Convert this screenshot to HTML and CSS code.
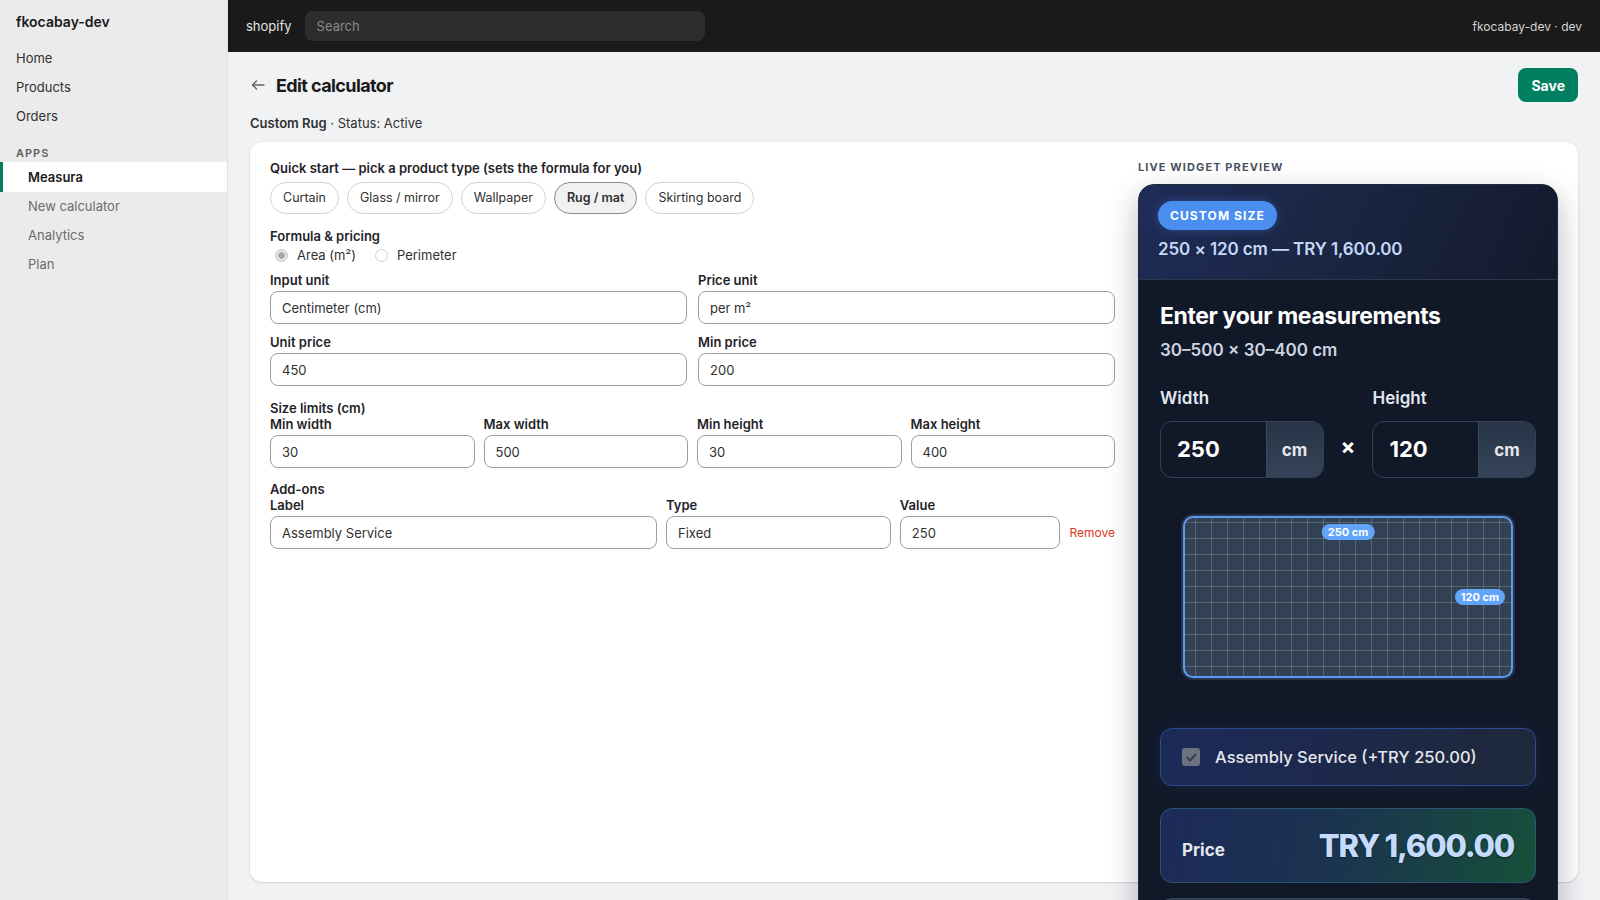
FILE: index.html
```html
<!DOCTYPE html>
<html lang="en">
<head>
    <meta charset="UTF-8">
    <meta name="viewport" content="width=device-width, initial-scale=1.0">
    <title>Edit calculator · Measura</title>
    <link rel="stylesheet" href="styles.css">
</head>
<body>
<div class="app">
    <aside class="sidebar">
        <div class="store-name">fkocabay-dev</div>
        <nav class="nav">
            <a class="nav-item">Home</a>
            <a class="nav-item">Products</a>
            <a class="nav-item">Orders</a>
        </nav>
        <div class="nav-heading">Apps</div>
        <a class="nav-app">Measura</a>
        <a class="nav-sub">New calculator</a>
        <a class="nav-sub">Analytics</a>
        <a class="nav-sub">Plan</a>
    </aside>

    <div class="main">
        <header class="topbar">
            <span class="brand">shopify</span>
            <div class="search">Search</div>
            <span class="account">fkocabay-dev · dev</span>
        </header>

        <div class="page">
            <div class="page-header">
                <div class="title-wrap">
                    <svg class="back" width="16" height="16" viewBox="0 0 16 16" fill="none" stroke="#616161" stroke-width="1.3" stroke-linecap="round" stroke-linejoin="round">
                        <path d="M14 8H2.5"/>
                        <path d="M6.5 4L2.5 8l4 4"/>
                    </svg>
                    <h1>Edit calculator</h1>
                </div>
                <button class="btn-save">Save</button>
            </div>
            <p class="subtitle"><strong>Custom Rug</strong> · Status: Active</p>

            <div class="card">
                <!-- settings form -->
                <div class="editor">
                    <div class="group-title">Quick start — pick a product type (sets the formula for you)</div>
                    <div class="pills">
                        <span class="pill">Curtain</span>
                        <span class="pill">Glass / mirror</span>
                        <span class="pill">Wallpaper</span>
                        <span class="pill active">Rug / mat</span>
                        <span class="pill">Skirting board</span>
                    </div>

                    <div class="section">
                        <div class="group-title">Formula &amp; pricing</div>
                        <div class="radios">
                            <span class="radio"><span class="dot checked"></span>Area (m²)</span>
                            <span class="radio"><span class="dot"></span>Perimeter</span>
                        </div>
                        <div class="grid-2">
                            <div class="field">
                                <label>Input unit</label>
                                <input type="text" value="Centimeter (cm)">
                            </div>
                            <div class="field">
                                <label>Price unit</label>
                                <input type="text" value="per m²">
                            </div>
                            <div class="field">
                                <label>Unit price</label>
                                <input type="text" value="450">
                            </div>
                            <div class="field">
                                <label>Min price</label>
                                <input type="text" value="200">
                            </div>
                        </div>
                    </div>

                    <div class="section size">
                        <div class="group-title small">Size limits (cm)</div>
                        <div class="grid-4">
                            <div class="field">
                                <label>Min width</label>
                                <input type="text" value="30">
                            </div>
                            <div class="field">
                                <label>Max width</label>
                                <input type="text" value="500">
                            </div>
                            <div class="field">
                                <label>Min height</label>
                                <input type="text" value="30">
                            </div>
                            <div class="field">
                                <label>Max height</label>
                                <input type="text" value="400">
                            </div>
                        </div>
                    </div>

                    <div class="section addons">
                        <div class="group-title small">Add-ons</div>
                        <div class="addon-row">
                            <div class="field">
                                <label>Label</label>
                                <input type="text" value="Assembly Service">
                            </div>
                            <div class="field">
                                <label>Type</label>
                                <input type="text" value="Fixed">
                            </div>
                            <div class="field">
                                <label>Value</label>
                                <input type="text" value="250">
                            </div>
                            <a class="remove">Remove</a>
                        </div>
                    </div>
                </div>

                <!-- storefront widget preview -->
                <div class="preview">
                    <div class="preview-label">Live widget preview</div>
                    <div class="widget">
                        <div class="widget-head">
                            <span class="badge">Custom size</span>
                            <div class="widget-sum">250 × 120 cm — TRY 1,600.00</div>
                        </div>
                        <div class="widget-body">
                            <h2>Enter your measurements</h2>
                            <div class="range">30–500 × 30–400 cm</div>

                            <div class="measure">
                                <div class="mfield">
                                    <div class="mlabel">Width</div>
                                    <div class="mbox">
                                        <span class="num">250</span>
                                        <span class="unit">cm</span>
                                    </div>
                                </div>
                                <span class="times">×</span>
                                <div class="mfield">
                                    <div class="mlabel">Height</div>
                                    <div class="mbox">
                                        <span class="num">120</span>
                                        <span class="unit">cm</span>
                                    </div>
                                </div>
                            </div>

                            <div class="stage">
                                <div class="rug" style="width: 330px; height: 162px;">
                                    <span class="dim dim-w">250 cm</span>
                                    <span class="dim dim-h">120 cm</span>
                                </div>
                            </div>

                            <div class="addon-box">
                                <span class="check">
                                    <svg width="13" height="13" viewBox="0 0 12 12" fill="none" stroke="#3a3f47" stroke-width="2" stroke-linecap="round" stroke-linejoin="round"><path d="M2.2 6.3l2.5 2.4 5-5.4"/></svg>
                                </span>
                                <span>Assembly Service (+TRY 250.00)</span>
                            </div>

                            <div class="price-box">
                                <span class="price-label">Price</span>
                                <span class="price-value">TRY 1,600.00</span>
                            </div>

                            <button class="cart-btn">Add to cart</button>
                        </div>
                    </div>
                </div>
            </div>
        </div>
    </div>
</div>
</body>
</html>
```

FILE: styles.css
```css
* {
    margin: 0;
    padding: 0;
    box-sizing: border-box;
}

body {
    font-family: Inter, "Noto Sans", sans-serif;
    font-size: 13px;
    color: #303030;
    background: #f1f2f4;
}

.app {
    display: flex;
    height: 100vh;
    overflow: hidden;
}

/* sidebar */

.sidebar {
    width: 228px;
    flex-shrink: 0;
    background: #ebebeb;
    border-right: 1px solid #e0e0e0;
}

.store-name {
    padding: 11px 16px 10px;
    font-size: 14px;
    font-weight: 600;
    line-height: 22px;
    color: #1a1a1a;
}

.nav {
    margin-top: 1px;
}

.nav-item {
    display: block;
    height: 29px;
    line-height: 29px;
    padding: 0 16px;
    font-size: 13px;
    color: #303030;
}

.nav-heading {
    margin-top: 13px;
    height: 18px;
    line-height: 18px;
    padding: 0 16px;
    font-size: 11px;
    font-weight: 600;
    letter-spacing: 1px;
    text-transform: uppercase;
    color: #616161;
}

.nav-app {
    display: block;
    height: 30px;
    line-height: 30px;
    padding-left: 25px;
    border-left: 3px solid #008060;
    background: #fff;
    font-weight: 600;
    color: #1a1a1a;
}

.nav-sub {
    display: block;
    height: 29px;
    line-height: 29px;
    padding-left: 28px;
    color: #6d6d6d;
}

/* top bar */

.main {
    flex: 1;
    display: flex;
    flex-direction: column;
    min-width: 0;
}

.topbar {
    height: 52px;
    flex-shrink: 0;
    display: flex;
    align-items: center;
    gap: 13px;
    padding: 0 18px;
    background: #1a1a1a;
}

.brand {
    font-size: 13px;
    color: #e3e3e3;
}

.search {
    width: 400px;
    height: 30px;
    line-height: 30px;
    padding: 0 12px;
    border-radius: 8px;
    background: #2d2d2d;
    color: #8a8a8a;
}

.account {
    margin-left: auto;
    font-size: 12px;
    color: #d4d4d4;
}

/* page */

.page {
    padding: 16px 22px 0;
}

.page-header {
    display: flex;
    align-items: center;
    justify-content: space-between;
}

.title-wrap {
    display: flex;
    align-items: center;
    gap: 10px;
}

.title-wrap h1 {
    font-size: 18px;
    font-weight: 700;
    letter-spacing: -0.6px;
    color: #1a1a1a;
}

.btn-save {
    height: 34px;
    padding: 0 13px;
    border: none;
    border-radius: 8px;
    background: #008060;
    color: #fff;
    font-family: inherit;
    font-size: 14px;
    font-weight: 700;
}

.subtitle {
    margin-top: 11px;
    line-height: 20px;
}

.subtitle strong {
    font-weight: 600;
}

.card {
    margin-top: 9px;
    height: calc(100vh - 160px);
    display: grid;
    grid-template-columns: minmax(0, 1fr) 420px;
    column-gap: 23px;
    padding: 16px 20px;
    background: #fff;
    border-radius: 12px;
    box-shadow: 0 1px 2px rgba(0, 0, 0, 0.1), 0 0 0 1px rgba(0, 0, 0, 0.03);
}

/* form */

.group-title {
    font-weight: 600;
    line-height: 20px;
    color: #1f2328;
}

.pills {
    display: flex;
    gap: 8px;
    margin-top: 4px;
}

.pill {
    height: 32px;
    line-height: 30px;
    padding: 0 12px;
    border: 1px solid #d4d4d4;
    border-radius: 999px;
    font-size: 12.5px;
    color: #303030;
}

.pill.active {
    background: #f1f1f1;
    border-color: #8a8a8a;
    font-weight: 600;
}

.section {
    margin-top: 13px;
}

.section .group-title {
    line-height: 18px;
}

.section.size {
    margin-top: 14px;
}

.section.addons {
    margin-top: 13px;
}

.section .group-title.small {
    line-height: 16px;
}

.radios {
    display: flex;
    align-items: center;
    height: 20px;
    padding-left: 5px;
}

.radio {
    display: inline-flex;
    align-items: center;
    gap: 9px;
    margin-right: 19px;
}

.dot {
    width: 13px;
    height: 13px;
    border-radius: 50%;
    border: 1px solid #cfcfcf;
    background: #fff;
}

.dot.checked {
    background: #e4e4e4 radial-gradient(circle, #a9a9a9 0 3px, transparent 3.5px);
    border-color: #c6c6c6;
}

.grid-2 {
    display: grid;
    grid-template-columns: 1fr 1fr;
    column-gap: 11px;
    row-gap: 10px;
    margin-top: 7px;
}

.grid-4 {
    display: grid;
    grid-template-columns: repeat(4, minmax(0, 1fr));
    column-gap: 9px;
}

.addon-row {
    display: grid;
    grid-template-columns: minmax(0, 2.41fr) minmax(0, 1.4fr) minmax(0, 1fr) auto;
    column-gap: 9px;
}

.field {
    display: flex;
    flex-direction: column;
    min-width: 0;
}

.field label {
    font-weight: 600;
    line-height: 16px;
    margin-bottom: 3px;
    color: #1f2328;
}

.field input {
    width: 100%;
    min-width: 0;
    height: 33px;
    padding: 0 11px;
    border: 1px solid #9b9fa4;
    border-radius: 8px;
    font-family: inherit;
    font-size: 13px;
    color: #303030;
    background: #fff;
}

.remove {
    align-self: end;
    line-height: 33px;
    font-size: 12px;
    color: #e0361c;
}

/* widget preview */

.preview {
    min-width: 0;
}

.preview-label {
    font-size: 11px;
    font-weight: 700;
    letter-spacing: 1.1px;
    line-height: 18px;
    text-transform: uppercase;
    color: #4a5261;
}

.widget {
    margin-top: 8px;
    background: #111827;
    border: 1px solid #1f2a3d;
    border-radius: 16px;
    overflow: hidden;
    box-shadow: 0 12px 30px rgba(15, 23, 42, 0.3);
}

.widget-head {
    padding: 16px 19px 19px;
    background: linear-gradient(115deg, #1e2c58 0%, #1b2643 45%, #121a2c 100%);
    border-bottom: 1px solid #2c3749;
}

.badge {
    display: inline-block;
    padding: 6px 12px;
    border-radius: 999px;
    background: #4a8ff0;
    color: #fff;
    font-size: 12px;
    font-weight: 700;
    letter-spacing: 1.1px;
    line-height: 17px;
    text-transform: uppercase;
    box-shadow: 0 0 10px rgba(74, 143, 240, 0.35);
}

.widget-sum {
    margin-top: 8px;
    font-size: 17px;
    font-weight: 600;
    letter-spacing: -0.1px;
    line-height: 22px;
    color: #c3d8f8;
}

.widget-body {
    padding: 21px 21px 0;
}

.widget-body h2 {
    font-size: 23px;
    font-weight: 700;
    letter-spacing: -0.4px;
    line-height: 30px;
    color: #fff;
}

.range {
    margin-top: 7px;
    font-size: 17px;
    font-weight: 600;
    line-height: 24px;
    color: #cbd5e1;
}

.measure {
    margin-top: 24px;
    display: grid;
    grid-template-columns: minmax(0, 1fr) auto minmax(0, 1fr);
    column-gap: 17px;
}

.mlabel {
    font-size: 17px;
    font-weight: 600;
    line-height: 24px;
    color: #e2e8f0;
}

.mbox {
    margin-top: 11px;
    height: 57px;
    display: flex;
    border: 1px solid #334155;
    border-radius: 12px;
    overflow: hidden;
}

.mbox .num {
    flex: 1;
    padding-left: 16px;
    line-height: 55px;
    font-size: 22px;
    font-weight: 700;
    color: #fff;
}

.mbox .unit {
    width: 57px;
    display: flex;
    align-items: center;
    justify-content: center;
    border-left: 1px solid #3b4960;
    background: linear-gradient(180deg, #283548, #354358);
    font-size: 17px;
    font-weight: 700;
    color: #e5e7eb;
}

.times {
    align-self: end;
    height: 57px;
    line-height: 50px;
    font-size: 22px;
    font-weight: 700;
    color: #fff;
}

.stage {
    padding-top: 38px;
    display: flex;
    justify-content: center;
}

.rug {
    position: relative;
    border: 2px solid #5b9cf0;
    border-radius: 10px;
    background-color: #334155;
    background-image:
        linear-gradient(rgba(255, 255, 255, 0.18) 1px, transparent 1px),
        linear-gradient(90deg, rgba(255, 255, 255, 0.18) 1px, transparent 1px);
    background-size: 16px 16px;
    background-position: 10px 4px;
    box-shadow: 0 0 0 2px #263348;
}

.dim {
    position: absolute;
    padding: 0 6px;
    border-radius: 999px;
    background: #60a5fa;
    color: #fff;
    font-size: 11px;
    font-weight: 700;
    line-height: 16px;
}

.dim-w {
    top: 6px;
    left: 50%;
    transform: translateX(-50%);
}

.dim-h {
    right: 6px;
    top: 50%;
    transform: translateY(-50%);
}

.addon-box {
    margin-top: 50px;
    height: 58px;
    display: flex;
    align-items: center;
    gap: 15px;
    padding: 0 21px;
    border: 1px solid #2c4a92;
    border-radius: 12px;
    background: linear-gradient(90deg, #1c2a58 0%, #1d2847 60%, #1e293b 100%);
    box-shadow: 0 0 18px rgba(59, 130, 246, 0.12);
    font-size: 16.5px;
    font-weight: 500;
    color: #e5e7eb;
}

.check {
    width: 18px;
    height: 18px;
    display: flex;
    align-items: center;
    justify-content: center;
    border-radius: 3px;
    background: #6b7280;
}

.price-box {
    margin-top: 22px;
    height: 75px;
    display: flex;
    align-items: center;
    justify-content: space-between;
    padding: 0 21px;
    border: 1px solid #2b5470;
    border-radius: 12px;
    background: linear-gradient(100deg, #1c2a58 0%, #1b3350 45%, #17503a 100%);
}

.price-label {
    padding-top: 8px;
    font-size: 17px;
    font-weight: 700;
    color: #e5e7eb;
}

.price-value {
    font-size: 31px;
    font-weight: 800;
    letter-spacing: -1.2px;
    color: #c5dbfb;
    text-shadow: 0 1px 2px rgba(0, 0, 0, 0.45);
}

.cart-btn {
    display: block;
    width: 100%;
    height: 52px;
    margin-top: 15px;
    border: 1px solid #3b4960;
    border-radius: 12px;
    background: #2a3648;
    color: #fff;
    font-family: inherit;
    font-size: 16px;
    font-weight: 700;
}
```
